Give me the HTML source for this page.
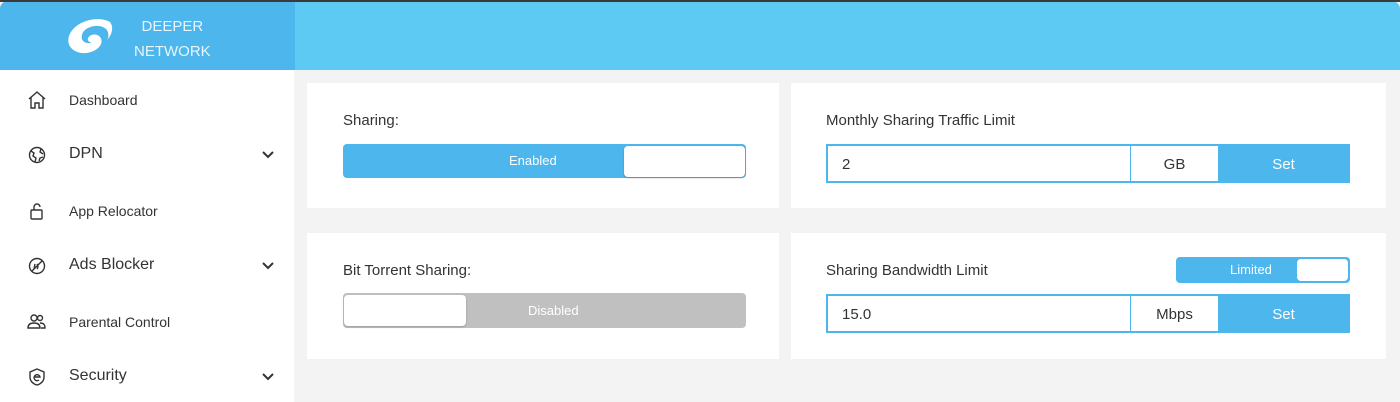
<!DOCTYPE html>
<html><head><style>
*{box-sizing:border-box;margin:0;padding:0}
body{width:1400px;height:402px;overflow:hidden;background:#f3f3f3;font-family:"Liberation Sans",sans-serif;position:relative;color:#333}
.top{position:absolute;left:0;top:0;width:1400px;height:2px;background:#3a3a3a}
.hdr{position:absolute;left:0;top:1px;width:1400px;height:69px;background:#5ccaf3;border-radius:8px 8px 0 0;overflow:hidden}
.logo{position:absolute;left:0;top:0;width:295px;height:69px;background:#4db6ec}
.logo .t{position:absolute;left:134px;top:13px;color:#e8f6fd;font-size:15px;line-height:25px;text-align:center}
.side{position:absolute;left:0;top:70px;width:294px;height:332px;background:#fff}
.item{position:absolute;left:0;width:294px;height:20px;font-size:14px;color:#333}
.item span{position:absolute;left:69px;top:2px}
.item.big span{font-size:16px;top:0}
.item svg.ic{position:absolute;left:27px;top:1px}
.item svg.chev{position:absolute;left:262px;top:6px}
.card{position:absolute;background:#fff}
.lbl{position:absolute;font-size:15px;color:#333}
.tog{position:absolute;border-radius:4px;color:#fff;font-size:13px}
.knob{position:absolute;background:#fff;border-radius:4px}
.ig{position:absolute;height:39px;border:2px solid #4db6ec;background:#4db6ec}
.ig .in{position:absolute;left:0;top:0;width:302px;height:35px;background:#fff;font-size:15px;padding:10px 0 0 14px}
.ig .u{position:absolute;left:303px;top:0;width:87px;height:35px;background:#fff;font-size:15px;text-align:center;padding-top:10px}
.ig .s{position:absolute;left:390px;top:0;width:131px;height:35px;color:#fff;font-size:15px;text-align:center;padding-top:10px}
</style></head><body>
<div class="hdr"><div class="logo">
<svg style="position:absolute;left:66px;top:16px" width="48" height="40" viewBox="0 0 48 40"><path d="M44 5C32-2 8 4 3 19c-4 13 10 20 22 16 9-3 13-10 9-15-3-4-10-3-12 1-1 3 2 5 4 4-4 3-12 0-10-7 2-9 18-12 24-6 3 3 3 8 1 11 5-5 7-13 3-18z" fill="#fff"/></svg>
<div class="t">DEEPER<br>NETWORK</div></div></div>
<div class="top"></div>
<div class="side">
<div class="item" style="top:20px"><svg class="ic" width="20" height="18" viewBox="0 0 20 18" fill="none" stroke="#333" stroke-width="1.4"><path d="M2 8L10 1l8 7M4 6v11h4v-5h4v5h4V6"/></svg><span>Dashboard</span></div>
<div class="item big" style="top:75px"><svg class="ic" width="20" height="18" viewBox="0 0 20 18" fill="none" stroke="#333" stroke-width="1.4"><circle cx="10" cy="9" r="7.5"/><path d="M4 5l3 2-1 3 3 2-1 4M14 3l-1 3 3 2M12 15l1-3 3-1"/></svg><span>DPN</span><svg class="chev" width="12" height="8" viewBox="0 0 12 8"><path d="M1 1l5 5 5-5" stroke="#333" stroke-width="2" fill="none"/></svg></div>
<div class="item" style="top:131px"><svg class="ic" width="20" height="18" viewBox="0 0 20 18" fill="none" stroke="#333" stroke-width="1.4"><rect x="4" y="8" width="11" height="9" rx="1"/><path d="M7 8V5a3 3 0 016 0"/></svg><span>App Relocator</span></div>
<div class="item big" style="top:186px"><svg class="ic" width="20" height="18" viewBox="0 0 20 18" fill="none" stroke="#333" stroke-width="1.4"><circle cx="10" cy="9" r="7.5"/><path d="M5 14L15 4M7 12l1-5M10 12a2 3 0 000-5"/></svg><span>Ads Blocker</span><svg class="chev" width="12" height="8" viewBox="0 0 12 8"><path d="M1 1l5 5 5-5" stroke="#333" stroke-width="2" fill="none"/></svg></div>
<div class="item" style="top:242px"><svg class="ic" width="20" height="18" viewBox="0 0 20 18" fill="none" stroke="#333" stroke-width="1.4"><circle cx="7" cy="5" r="3"/><circle cx="13" cy="5" r="2.5"/><path d="M1 15c0-4 3-5 6-5s6 1 6 5zM13 10c3 0 5 1 5 5h-4"/></svg><span>Parental Control</span></div>
<div class="item big" style="top:297px"><svg class="ic" width="20" height="18" viewBox="0 0 20 18" fill="none" stroke="#333" stroke-width="1.4"><path d="M10 1l7 3v5c0 4-3 7-7 8-4-1-7-4-7-8V4z"/><path d="M7 9h6a3 3 0 10-1 3"/></svg><span>Security</span><svg class="chev" width="12" height="8" viewBox="0 0 12 8"><path d="M1 1l5 5 5-5" stroke="#333" stroke-width="2" fill="none"/></svg></div>
</div>

<div class="card" style="left:307px;top:83px;width:472px;height:125px"></div>
<div class="card" style="left:307px;top:233px;width:472px;height:126px"></div>
<div class="card" style="left:791px;top:83px;width:595px;height:125px"></div>
<div class="card" style="left:791px;top:233px;width:595px;height:126px"></div>

<div class="lbl" style="left:343px;top:112px">Sharing:</div>
<div class="tog" style="left:343px;top:144px;width:403px;height:34px;background:#4db6ec"><span style="position:absolute;left:166px;top:9px">Enabled</span><div class="knob" style="left:281px;top:2px;width:121px;height:31px;box-shadow:0 1px 2px rgba(0,0,0,.2)"></div></div>

<div class="lbl" style="left:343px;top:262px">Bit Torrent Sharing:</div>
<div class="tog" style="left:343px;top:293px;width:403px;height:35px;background:#c0c0c0"><span style="position:absolute;left:185px;top:10px">Disabled</span><div class="knob" style="left:1px;top:2px;width:122px;height:31px;box-shadow:0 1px 2px rgba(0,0,0,.2)"></div></div>

<div class="lbl" style="left:826px;top:112px">Monthly Sharing Traffic Limit</div>
<div class="ig" style="left:826px;top:144px;width:524px"><div class="in">2</div><div class="u">GB</div><div class="s">Set</div></div>

<div class="lbl" style="left:826px;top:262px">Sharing Bandwidth Limit</div>
<div class="tog" style="left:1176px;top:257px;width:174px;height:26px;background:#4db6ec"><span style="position:absolute;left:54px;top:5px">Limited</span><div class="knob" style="left:121px;top:2px;width:51px;height:22px"></div></div>
<div class="ig" style="left:826px;top:294px;width:524px"><div class="in">15.0</div><div class="u">Mbps</div><div class="s">Set</div></div>
</body></html>
